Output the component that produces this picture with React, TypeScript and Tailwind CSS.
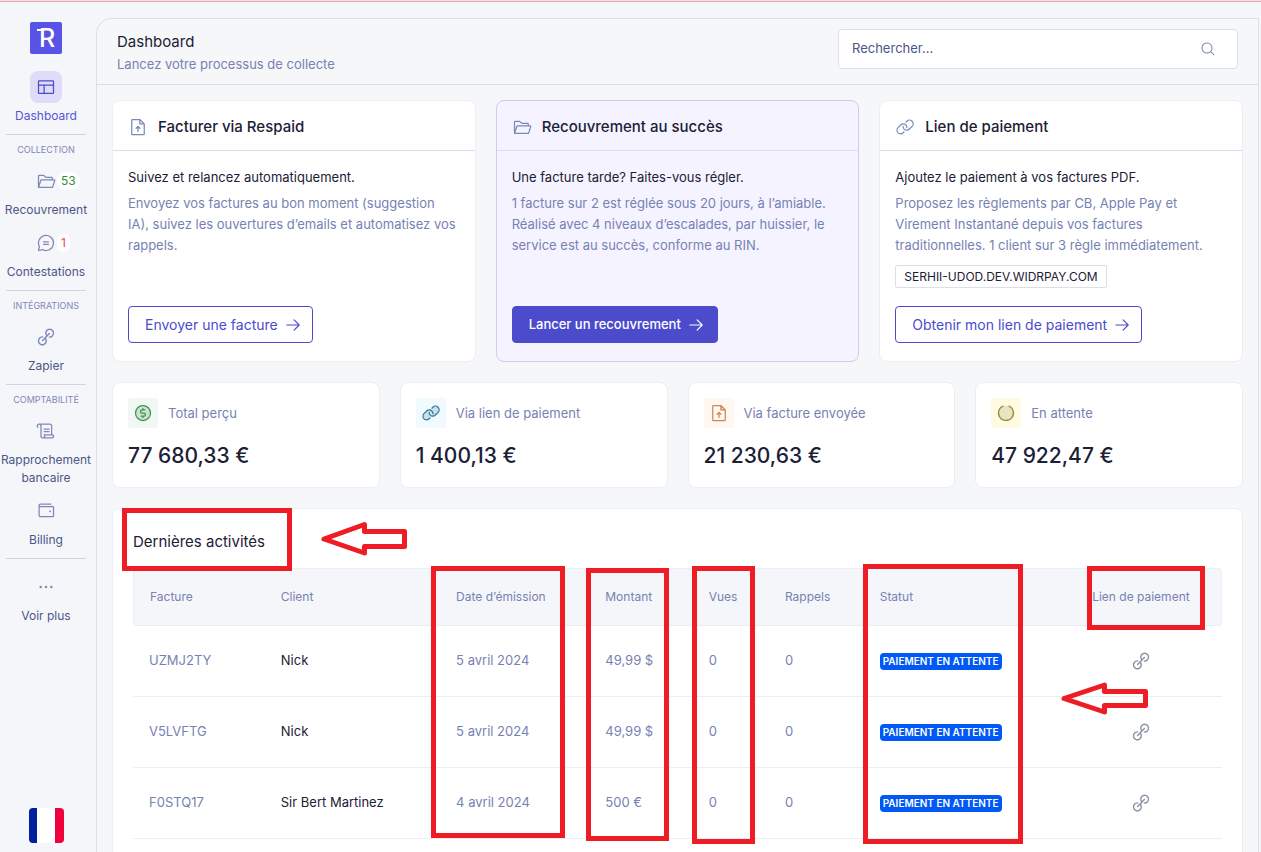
import type { ReactNode } from 'react'
import clsx from 'clsx'
import {
  PiArrowRight,
  PiChatCircleText,
  PiCurrencyCircleDollarDuotone,
  PiDotsThreeBold,
  PiFileArrowUp,
  PiFileArrowUpDuotone,
  PiFolderOpen,
  PiLayout,
  PiLink,
  PiLinkDuotone,
  PiMagnifyingGlass,
  PiScroll,
  PiWallet,
} from 'react-icons/pi'

const invoices = [
  { id: 'UZMJ2TY', client: 'Nick', date: '5 avril 2024', amount: '49,99 $', views: 0, reminders: 0 },
  { id: 'V5LVFTG', client: 'Nick', date: '5 avril 2024', amount: '49,99 $', views: 0, reminders: 0 },
  { id: 'F0STQ17', client: 'Sir Bert Martinez', date: '4 avril 2024', amount: '500 €', views: 0, reminders: 0 },
]

function ChainIcon() {
  return (
    <svg width="18" height="18" viewBox="0 0 18 18" fill="none" stroke="currentColor" strokeWidth="1.4" strokeLinecap="round">
      <path d="M9.700 7.800a3.900 3.900 0 1 1 2.600 1.300" />
      <path d="M8.300 10.200a3.900 3.900 0 1 1-2.600-1.300" />
      <path d="M5.600 12.400l6.800-6.800" />
    </svg>
  )
}

function Logo() {
  return (
    <svg width="32" height="32" viewBox="0 0 32 32" role="img" aria-label="Respaid">
      <rect width="32" height="32" rx="2" fill="#5753e6" />
      <rect x="7" y="7" width="6" height="2" fill="#fff" />
      <text x="9" y="25" fill="#fff" fontSize="25" fontWeight="500" fontFamily="Inter, sans-serif">
        R
      </text>
    </svg>
  )
}

function NavItem({ icon, label, badge, active }: { icon: ReactNode; label: string; badge?: ReactNode; active?: boolean }) {
  return (
    <a href="#" className="flex w-full flex-col items-center gap-1">
      <span
        className={clsx(
          'relative flex size-8 items-center justify-center rounded-lg text-[20px]',
          active ? 'bg-[#dfdcfa] text-[#4b4bcc]' : 'text-[#7d88b8]',
        )}
      >
        {icon}
        {badge}
      </span>
      <span className={clsx('text-center text-[12px] leading-[18px]', active ? 'text-[#5753d9]' : 'text-[#4b5687]')}>
        {label}
      </span>
    </a>
  )
}

function NavSection({ title, children }: { title?: string; children: ReactNode }) {
  return (
    <div className="mt-[9px] flex w-full flex-col items-center gap-2">
      <hr className="w-20 border-[#d3d5dd]" />
      {title && <p className="text-[9px] leading-[14px] text-[#7d88b8]">{title}</p>}
      {children}
    </div>
  )
}

function Badge({ className, children }: { className: string; children: ReactNode }) {
  return (
    <span className={clsx('absolute top-[7px] left-[27px] rounded-full bg-white px-1 text-[12px] leading-[18px]', className)}>
      {children}
    </span>
  )
}

function Sidebar() {
  return (
    <aside className="flex w-24 shrink-0 flex-col items-center pt-5 pr-1 pb-[9px]">
      <Logo />
      <nav className="mt-[17px] flex w-full flex-col items-center">
        <NavItem active icon={<PiLayout />} label="Dashboard" />
        <NavSection title="COLLECTION">
          <NavItem icon={<PiFolderOpen />} label="Recouvrement" badge={<Badge className="text-[#2f8f3a]">53</Badge>} />
          <NavItem icon={<PiChatCircleText />} label="Contestations" badge={<Badge className="text-[#ef4858]">1</Badge>} />
        </NavSection>
        <NavSection title="INTÉGRATIONS">
          <NavItem icon={<ChainIcon />} label="Zapier" />
        </NavSection>
        <NavSection title="COMPTABILITÉ">
          <NavItem icon={<PiScroll />} label="Rapprochement bancaire" />
          <NavItem icon={<PiWallet />} label="Billing" />
        </NavSection>
        <NavSection>
          <div className="mt-1 w-full">
            <NavItem icon={<PiDotsThreeBold />} label="Voir plus" />
          </div>
        </NavSection>
      </nav>
      <button type="button" aria-label="Français" className="mt-auto flex size-[35px] overflow-hidden rounded">
        <span className="h-full w-1/4 bg-[#00209f]" />
        <span className="h-full w-1/2 bg-white" />
        <span className="h-full w-1/4 bg-[#f0003c]" />
      </button>
    </aside>
  )
}

function Header() {
  return (
    <header className="flex items-start justify-between border-b border-[#dcdeeb] px-5 pt-[10px] pb-[9px]">
      <div className="flex flex-col">
        <h1 className="text-[15px] leading-[25px] text-[#1c2036]">Dashboard</h1>
        <p className="text-[13px] leading-[21px] text-[#7682b3]">Lancez votre processus de collecte</p>
      </div>
      <label className="flex h-10 w-[400px] items-center rounded border border-[#dcdeeb] bg-white pr-[21px] pl-[13px]">
        <input
          type="search"
          aria-label="Rechercher"
          placeholder="Rechercher..."
          className="min-w-0 flex-1 text-[13px] text-[#4b5687] outline-none placeholder:text-[#4b5687]"
        />
        <PiMagnifyingGlass className="size-4 text-[#7d88b8]" />
      </label>
    </header>
  )
}

type ActionCardProps = {
  icon: ReactNode
  title: string
  lead: string
  text: string
  action: string
  link?: string
  highlighted?: boolean
}

function ActionCard({ icon, title, lead, text, action, link, highlighted }: ActionCardProps) {
  return (
    <article
      className={clsx(
        'flex flex-col rounded-lg border',
        highlighted ? 'border-[#cfcaf2] bg-[#f5f3ff]' : 'border-[#eceef5] bg-white',
      )}
    >
      <div className="flex items-center gap-[10px] border-b border-[#dcdeeb] px-[15px] pt-[13px] pb-[11px] text-[#7d88b8]">
        {icon}
        <h2 className="text-[15px] leading-[25px] font-medium text-[#1c2036]">{title}</h2>
      </div>
      <div className="flex flex-1 flex-col items-start px-[15px] pt-4 pb-[18px]">
        <p className="text-[13px] leading-[21px] text-[#1c2036]">{lead}</p>
        <p className="mt-[5px] text-[13px] leading-[21px] text-[#7682b3]">{text}</p>
        {link && (
          <a href="#" className="mt-[9px] rounded-xs border border-[#dcdeeb] bg-white px-2 text-[12px] leading-[21px] text-[#1c2036]">
            {link}
          </a>
        )}
        <div className={link ? 'pt-[18px]' : 'mt-auto'}>
          <button
            type="button"
            className={clsx(
              'flex h-[37px] items-center gap-[6px] rounded border border-[#4b4bcc] pl-4',
              highlighted ? 'bg-[#4b4bcc] pr-3 text-[13px] font-medium text-white' : 'bg-white pr-[10px] text-sm text-[#4b4bcc]',
            )}
          >
            {action}
            <PiArrowRight className="size-[18px]" />
          </button>
        </div>
      </div>
    </article>
  )
}

function StatCard({ icon, tint, label, value }: { icon: ReactNode; tint: string; label: string; value: string }) {
  return (
    <article className="flex flex-col rounded-lg border border-[#eceef5] bg-white p-[15px]">
      <div className="flex items-center gap-[10px]">
        <span className={clsx('flex size-[30px] items-center justify-center rounded-xs text-[20px]', tint)}>{icon}</span>
        <p className="text-[13px] leading-5 text-[#7682b3]">{label}</p>
      </div>
      <p className="mt-3 text-[21px] leading-8 font-medium text-[#1c2036]">{value}</p>
    </article>
  )
}

function Activities() {
  const head = 'h-[58px] border-y border-[#eceef5] bg-[#f5f6f9] px-4 font-normal'
  const cell = 'h-[71px] border-b border-[#eceef5] px-4'
  return (
    <section className="rounded-lg border border-[#eceef5] bg-white px-5 pb-5">
      <h2 className="pt-5 pb-[14px] text-[15px] leading-[25px] text-[#1c2036]">Dernières activités</h2>
      <table className="w-full table-fixed border-separate border-spacing-0 text-left text-[13px] text-[#7682b3]">
        <colgroup>
          <col className="w-[12.1%]" />
          <col className="w-[16.1%]" />
          <col className="w-[13.7%]" />
          <col className="w-[9.5%]" />
          <col className="w-[7%]" />
          <col className="w-[8.7%]" />
          <col className="w-[18.1%]" />
          <col className="w-[14.8%]" />
        </colgroup>
        <thead className="text-[12px]">
          <tr>
            <th className={clsx(head, 'rounded-l border-l')}>Facture</th>
            <th className={head}>Client</th>
            <th className={head}>Date d’émission</th>
            <th className={head}>Montant</th>
            <th className={head}>Vues</th>
            <th className={head}>Rappels</th>
            <th className={head}>Statut</th>
            <th className={clsx(head, 'rounded-r border-r text-center')}>Lien de paiement</th>
          </tr>
        </thead>
        <tbody>
          {invoices.map((invoice) => (
            <tr key={invoice.id}>
              <td className={cell}>{invoice.id}</td>
              <td className={clsx(cell, 'text-[#1c2036]')}>{invoice.client}</td>
              <td className={cell}>{invoice.date}</td>
              <td className={cell}>{invoice.amount}</td>
              <td className={cell}>{invoice.views}</td>
              <td className={cell}>{invoice.reminders}</td>
              <td className={cell}>
                <span className="inline-block rounded-sm bg-[#0058f5] px-[3px] align-middle text-[10px] leading-[17px] font-semibold whitespace-nowrap text-white">
                  PAIEMENT EN ATTENTE
                </span>
              </td>
              <td className={cell}>
                <a href="#" aria-label="Lien de paiement" className="flex justify-center text-[#8792a5]">
                  <ChainIcon />
                </a>
              </td>
            </tr>
          ))}
        </tbody>
      </table>
    </section>
  )
}

// Red boxes and arrows drawn over the page
function Annotations() {
  return (
    <svg className="pointer-events-none absolute top-0 left-0" width="1261" height="852" fill="none" stroke="#ee1c25" strokeWidth="5">
      <rect x="124.5" y="510.5" width="165" height="58" />
      <rect x="433.5" y="568.5" width="129" height="267" />
      <rect x="588.5" y="570.5" width="78" height="268" />
      <rect x="694.5" y="568.5" width="58" height="273" />
      <rect x="865.5" y="566.5" width="155" height="275" />
      <rect x="1089.5" y="568.5" width="113" height="59" />
      <g strokeLinejoin="round">
        <path d="M324 539L364.500 524.500V531.500H404.500V546.500H364.500V553Z" />
        <path d="M1064 698.500L1104.500 685V691.500H1145.500V705.500H1104.500V712Z" />
      </g>
    </svg>
  )
}

export default function App() {
  return (
    <div className="relative flex h-screen flex-col overflow-hidden bg-[#f5f6fa] font-['Inter',sans-serif]">
      <div className="h-0.5 shrink-0 border-b border-[#dfa9b4] bg-[#ffd9e1]" />
      <div className="flex min-h-0 flex-1">
        <Sidebar />
        <main className="mt-4 mr-[2px] min-w-0 flex-1 overflow-hidden rounded-tl-2xl border border-b-0 border-[#dcdeeb] bg-[#f6f7f9]">
          <Header />
          <div className="flex flex-col gap-5 p-[15px]">
            <div className="grid grid-cols-3 gap-5">
              <ActionCard
                icon={<PiFileArrowUp className="size-5" />}
                title="Facturer via Respaid"
                lead="Suivez et relancez automatiquement."
                text={'Envoyez vos factures au bon moment (suggestion IA),\u00a0suivez les ouvertures d’emails et automatisez vos rappels.'}
                action="Envoyer une facture"
              />
              <ActionCard
                highlighted
                icon={<PiFolderOpen className="size-5" />}
                title="Recouvrement au succès"
                lead="Une facture tarde? Faites-vous régler."
                text="1 facture sur 2 est réglée sous 20 jours, à l’amiable. Réalisé avec 4 niveaux d’escalades, par huissier, le service est au succès, conforme au RIN."
                action="Lancer un recouvrement"
              />
              <ActionCard
                icon={<PiLink className="size-5" />}
                title="Lien de paiement"
                lead="Ajoutez le paiement à vos factures PDF."
                text="Proposez les règlements par CB, Apple Pay et Virement Instantané depuis vos factures traditionnelles. 1 client sur 3 règle immédiatement."
                link="SERHII-UDOD.DEV.WIDRPAY.COM"
                action="Obtenir mon lien de paiement"
              />
            </div>
            <div className="grid grid-cols-4 gap-5">
              <StatCard
                icon={<PiCurrencyCircleDollarDuotone />}
                tint="bg-[#f1f8f3] text-[#3f9150]"
                label="Total perçu"
                value="77 680,33 €"
              />
              <StatCard icon={<PiLinkDuotone />} tint="bg-[#f1faff] text-[#33789b]" label="Via lien de paiement" value="1 400,13 €" />
              <StatCard
                icon={<PiFileArrowUpDuotone />}
                tint="bg-[#fff8f1] text-[#cf8455]"
                label="Via facture envoyée"
                value="21 230,63 €"
              />
              <StatCard
                icon={
                  <svg width="18" height="18" viewBox="0 0 18 18" fill="none">
                    <circle cx="9" cy="9" r="7.5" fill="#e9e4c2" />
                    <path d="M12 2.100a7.500 7.500 0 1 1-6 0" stroke="#9a8f3c" strokeWidth="1.300" strokeLinecap="round" />
                  </svg>
                }
                tint="bg-[#fffbe3]"
                label="En attente"
                value="47 922,47 €"
              />
            </div>
            <Activities />
          </div>
        </main>
      </div>
      <Annotations />
    </div>
  )
}
